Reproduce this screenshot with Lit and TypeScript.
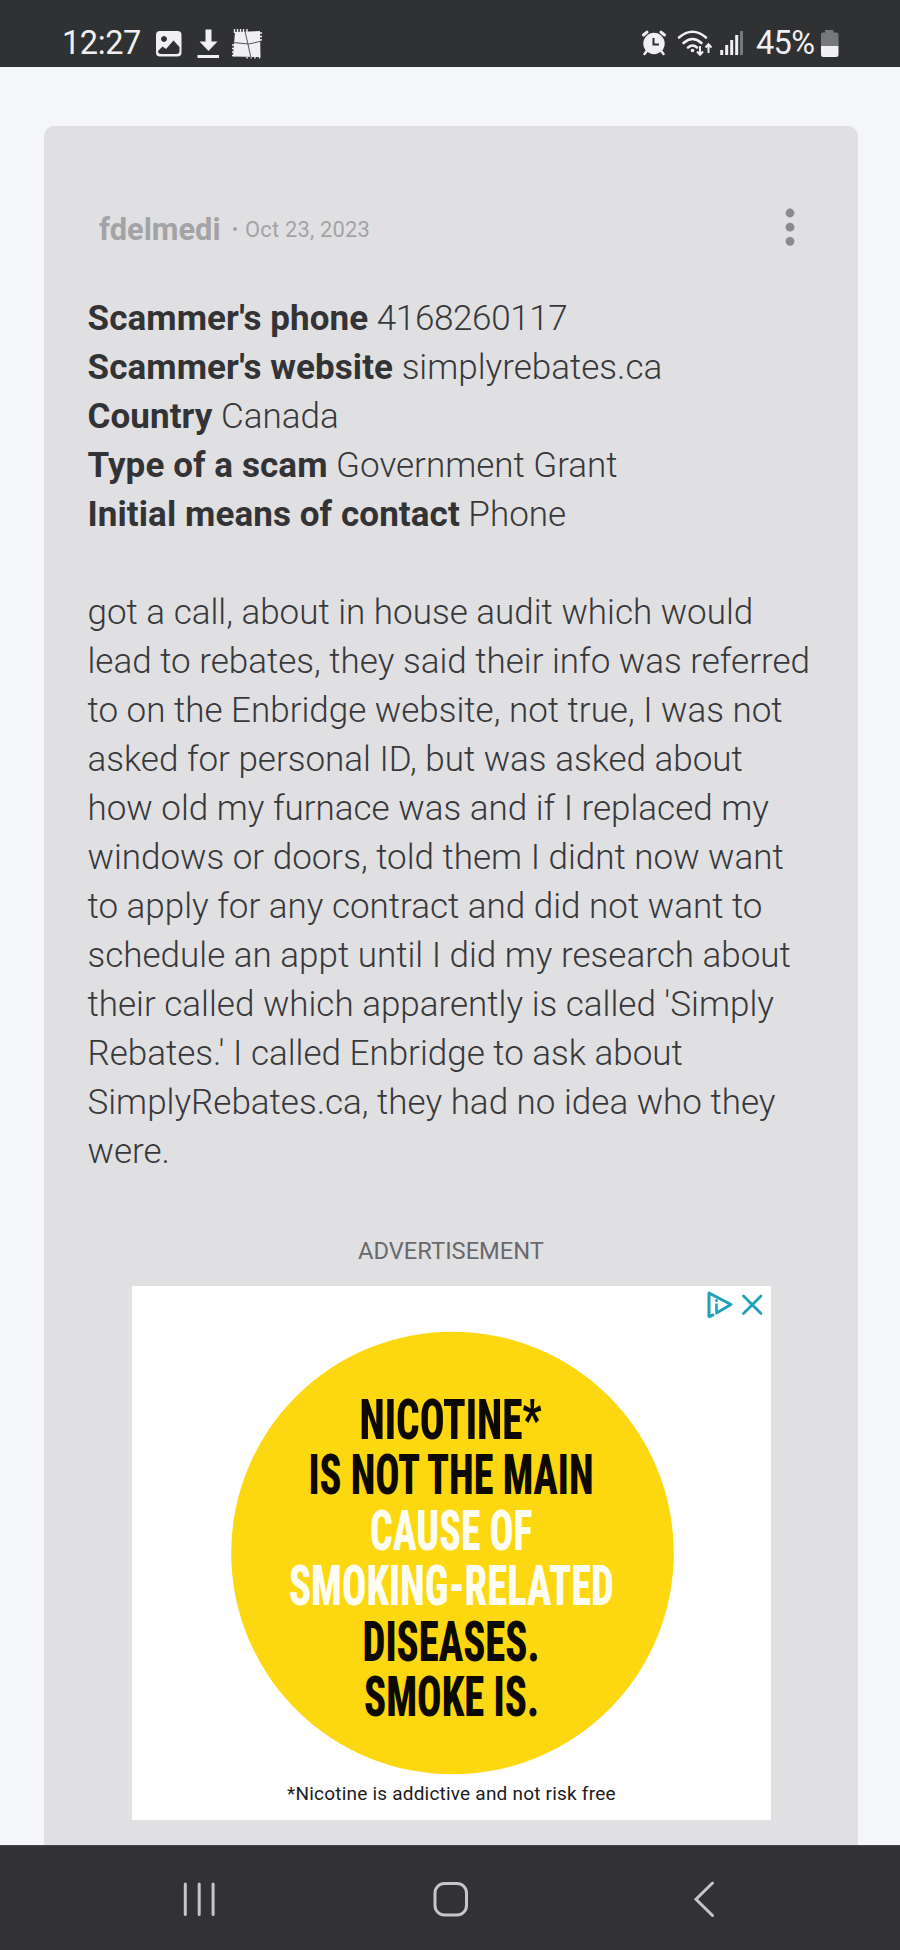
import { LitElement, html, css, svg } from "lit";
import { customElement } from "lit/decorators.js";

const FACTS: [string, string][] = [
  ["Scammer's phone", "4168260117"],
  ["Scammer's website", "simplyrebates.ca"],
  ["Country", "Canada"],
  ["Type of a scam", "Government Grant"],
  ["Initial means of contact", "Phone"],
];

const STORY = [
  "got a call, about in house audit which would",
  "lead to rebates, they said their info was referred",
  "to on the Enbridge website, not true, I was not",
  "asked for personal ID, but was asked about",
  "how old my furnace was and if I replaced my",
  "windows or doors, told them I didnt now want",
  "to apply for any contract and did not want to",
  "schedule an appt until I did my research about",
  "their called which apparently is called 'Simply",
  "Rebates.' I called Enbridge to ask about",
  "SimplyRebates.ca, they had no idea who they",
  "were.",
];

@customElement("status-bar")
class StatusBar extends LitElement {
  static styles = css`
    :host { display: flex; justify-content: space-between; height: 67px; box-sizing: border-box;
      padding: 20px 61px 0 62px; background: #303133; color: #f0f0f2; }
    .side { display: flex; height: 47px; align-items: flex-start; }
    .text { font-size: 32.500px; line-height: 46px; white-space: nowrap; }
    .time { width: 80px; letter-spacing: -0.4px; }
    .pct { width: 64px; letter-spacing: -0.7px; }
    svg { display: block; }
  `;
  render() {
    return html`
      <div class="side">
        <span class="text time">12:27</span>
        <svg width="122" height="47" viewBox="142 20 122 47" fill="#f0f0f2">
          <path fill-rule="evenodd" d="M160 31h17.500a4 4 0 0 1 4 4v17.500a4 4 0 0 1-4 4h-17.500a4 4 0 0 1-4-4v-17.500a4 4 0 0 1 4-4ZM158 51l4.500-4.500 3.500 2.500 7.500-8.500 6 6.500v4a3 3 0 0 1-3 3h-15.500a3 3 0 0 1-3-3ZM164 36a3 3 0 1 0 .01 0Z"/>
          <path d="M205.500 29.500h6v12h6L208.500 51l-9-9.500h6ZM197.500 55h21.500v3h-21.500Z"/>
          <path d="M235 32l25-1 .5 26-27.500-.5Z"/>
          <g stroke="#f0f0f2" stroke-width="1.400"><path d="M234.500 29v4M237.500 29v4M240.500 29v4M243.500 29v4M247 29v4M258 33h4M258 36.500h4M258 40h4M232 45h4M232 48.500h4M232 52h4M232 55.500h4M247 57v1.500M251 55v3.500M255 55v3.500M259.500 55v3.500"/></g>
          <path d="M233 42.500l16 1.500 13-3M245 31l6 27" fill="none" stroke="#55565a" stroke-width="1"/>
        </svg>
      </div>
      <div class="side">
        <svg width="118" height="47" viewBox="638 20 118 47" fill="none" stroke="#f0f0f2">
          <circle cx="654" cy="43.500" r="10.700" fill="#f0f0f2" stroke="none"/>
          <path d="M643.500 35l3.500-2.800M661 32.200l3.500 2.800" stroke-width="3" stroke-linecap="round"/>
          <path d="M647.500 50l-3 4M660.500 50l3 4" stroke-width="2.500" stroke-linecap="round"/>
          <path d="M653.500 38v6.500h5.500" stroke="#303133" stroke-width="2"/>
          <g stroke-width="2.600" stroke-linecap="round">
            <path d="M679 37.500q13.500-11.500 27 0M683.500 43q9-8 18 0M688 47.500q4.500-4 9 0"/>
          </g>
          <circle cx="692.500" cy="50.500" r="1.800" fill="#f0f0f2" stroke="none"/>
          <path d="M700 46v8M697 51.500l3 3.200 3-3.200M708.500 53v-8M705.500 47.500l3-3.200 3 3.200" stroke-width="2"/>
          <path d="M721.700 50v5M726.700 45v10M731.700 40v15M736.700 35v20" stroke-width="3"/>
          <path d="M741.500 31v24" stroke-width="3" stroke="#77787a"/>
        </svg>
        <span class="text pct">45%</span>
        <svg width="19" height="47" viewBox="820 20 19 47">
          <path d="M825 30h8.500v2.500h3a2 2 0 0 1 2 2V46h-17.500V34.500a2 2 0 0 1 2-2h2Z" fill="#77787a"/>
          <path d="M821 46h17.500v8.500a2.500 2.500 0 0 1-2.500 2.500h-12.500a2.500 2.500 0 0 1-2.500-2.500Z" fill="#f0f0f2"/>
        </svg>
      </div>`;
  }
}

@customElement("nav-bar")
class NavBar extends LitElement {
  static styles = css`
    :host { display: block; height: 105px; background: #313136; flex: none; }
    svg { display: block; }
  `;
  render() {
    return html`<svg width="900" height="105" viewBox="0 1845 900 105" fill="none" stroke="#c6c6ca" stroke-width="3" stroke-linecap="round">
      <path d="M0 1845.500H900" stroke="#45464a" stroke-width="1"/>
      <path d="M185.300 1884v30.500M199.200 1884v30.500M213.100 1884v30.500"/>
      <rect x="435" y="1883.500" width="31.500" height="31.500" rx="9.500"/>
      <path d="M712.500 1883L696 1899.200L712.500 1915.500"/>
    </svg>`;
  }
}

const AD_LINES: { t: string; x: number; w: number; y: number; c: string }[] = [
  { t: "NICOTINE*", x: 359.5, w: 182, y: 1438.7, c: "#0b0900" },
  { t: "IS NOT THE MAIN", x: 308.5, w: 285, y: 1494, c: "#0b0900" },
  { t: "CAUSE OF", x: 370, w: 162.5, y: 1549.7, c: "#fffef4" },
  { t: "SMOKING-RELATED", x: 289, w: 325, y: 1605.2, c: "#fffef4" },
  { t: "DISEASES.", x: 362.5, w: 177, y: 1660.7, c: "#0b0900" },
  { t: "SMOKE IS.", x: 364, w: 175, y: 1716, c: "#0b0900" },
];

@customElement("ad-banner")
class AdBanner extends LitElement {
  static styles = css`
    :host { display: block; width: 639px; height: 534px; background: #fff; }
    svg { display: block; }
    .head { font: 800 55.800px Roboto, sans-serif; font-stretch: 75%; }
    .note { font: 400 19px Roboto, sans-serif; }
  `;
  render() {
    return html`<svg width="639" height="534" viewBox="132 1286 639 534">
      <circle cx="452.500" cy="1553" r="221.300" fill="#fdd70f"/>
      ${AD_LINES.map((l) => svg`<text class="head" x=${l.x} y=${l.y} fill=${l.c} textLength=${l.w} lengthAdjust="spacingAndGlyphs">${l.t}</text>`)}
      <text class="note" x="287" y="1800" textLength="328.500" fill="#1b1b20">*Nicotine is addictive and not risk free</text>
      <g fill="none" stroke="#1fa3b8" stroke-linecap="round" stroke-linejoin="round">
        <path d="M713 1315l-4 1.500v-23.500l22 11.500-14.500 8.500" stroke-width="3"/>
        <path d="M716.500 1303.500v8.500" stroke-width="2.600" stroke-linecap="butt"/>
        <path d="M743.500 1296l17.500 17.500M761 1296l-17.500 17.500" stroke-width="2.800"/>
      </g>
      <circle cx="716.500" cy="1300.500" r="1.500" fill="#1fa3b8"/>
    </svg>`;
  }
}

@customElement("app-root")
class AppRoot extends LitElement {
  static styles = css`
    :host { display: flex; flex-direction: column; height: 1950px; overflow: hidden; background: #f5f6f8;
      font-family: Roboto, sans-serif; }
    .page { flex: 1; min-height: 0; padding: 59px 42px 0 44px; overflow: hidden; }
    .card { height: 1719px; box-sizing: border-box; background: #e0e0e2; border-radius: 10px 10px 0 0;
      padding: 73px 0 0; display: flex; flex-direction: column; }
    .head { display: flex; align-items: center; height: 60px; padding: 0 63px 0 55px; color: #a3a3a5; }
    .user { font-size: 30.800px; font-weight: 700; width: 133.500px; }
    .dot { width: 4.500px; height: 4.500px; border-radius: 50%; background: #a3a3a5; margin-right: 8px; }
    .date { font-size: 21.900px; flex: 1; letter-spacing: 0.2px; }
    .more { padding-bottom: 5px; }
    .copy { padding-left: 43.500px; margin-top: 34.500px; font-size: 35px; line-height: 49px; font-weight: 300; color: #38383b; white-space: nowrap; }
    .copy b { font-weight: 700; color: #333336; letter-spacing: 0.08px; }
    .num { letter-spacing: -0.35px; }
    .story { margin-top: 49px; }
    .row { display: block; width: max-content; }
    .label { margin-top: 59.500px; text-align: center; font-size: 23.700px; line-height: 32px; color: #69696c; }
    .ad { margin: 19px 0 0 88px; }
  `;
  render() {
    return html`
      <status-bar></status-bar>
      <div class="page">
        <article class="card">
          <div class="head">
            <span class="user">fdelmedi</span><span class="dot"></span><span class="date">Oct 23, 2023</span>
            <svg class="more" width="10" height="38" viewBox="785 207.500 10 38" fill="#8b8b8d"><circle cx="790" cy="212.500" r="4.400"/><circle cx="790" cy="226.700" r="4.400"/><circle cx="790" cy="240.800" r="4.400"/></svg>
          </div>
          <div class="copy">
            ${FACTS.map(([k, v], i) => html`<span class="row"><b>${k}</b> <span class=${i === 0 ? "num" : ""}>${v}</span></span>`)}
            <div class="story">${STORY.map((l) => html`<span class="row">${l}</span>`)}</div>
          </div>
          <div class="label">ADVERTISEMENT</div>
          <ad-banner class="ad"></ad-banner>
        </article>
      </div>
      <nav-bar></nav-bar>`;
  }
}
